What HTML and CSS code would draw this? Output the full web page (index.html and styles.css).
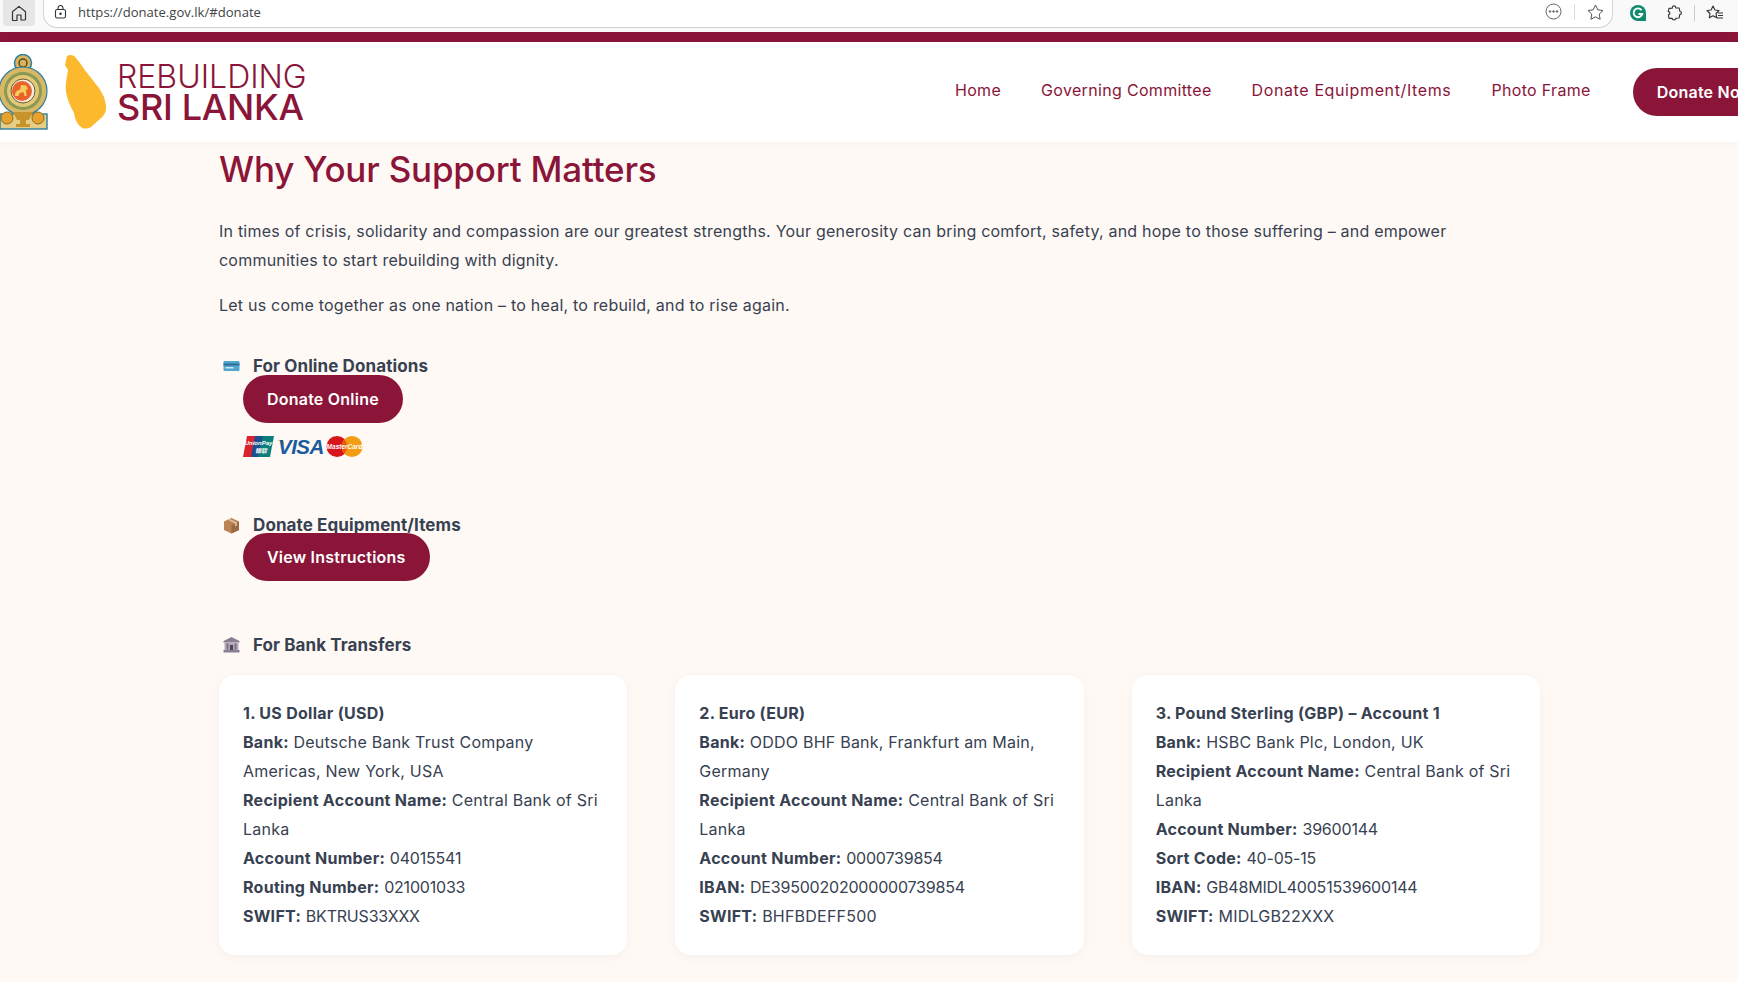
FILE: index.html
```
<!DOCTYPE html>
<html lang="en">
<head>
<meta charset="utf-8">
<title>Rebuilding Sri Lanka</title>
<link rel="stylesheet" href="styles.css">
</head>
<body>
<div class="toolbar">
  <div class="home-btn">
    <svg width="16" height="16" viewBox="0 0 16 16" fill="none" stroke="#333" stroke-width="1.2" stroke-linejoin="round"><path d="M1.5 6.8 8 1.4l6.5 5.400v7.400a.8.8 0 0 1-.8.8H10V10H6v5.600H2.300a.8.8 0 0 1-.8-.8z"/></svg>
  </div>
  <div class="address">
    <svg class="lock" width="13" height="14" viewBox="0 0 13 14" fill="none" stroke="#333" stroke-width="1.100"><rect x="1.500" y="4.500" width="10" height="8.500" rx="1.800"/><path d="M4 4.500V3a2.500 2.500 0 0 1 5 0v1.500"/><circle cx="6.500" cy="8.700" r=".7" fill="#333"/></svg>
    <span class="url">https://donate.gov.lk/#donate</span>
    <svg class="addr-more" width="17" height="17" viewBox="0 0 17 17" fill="none" stroke="#666" stroke-width="1"><circle cx="8.500" cy="8.500" r="7.500"/><circle cx="5" cy="8.500" r=".8" fill="#666"/><circle cx="8.500" cy="8.500" r=".8" fill="#666"/><circle cx="12" cy="8.500" r=".8" fill="#666"/></svg>
    <span class="addr-sep"></span>
    <svg class="addr-star" width="17" height="16" viewBox="0 0 17 16" fill="none" stroke="#555" stroke-width="1" stroke-linejoin="round"><path d="M8.500 1l2.300 4.800 5.200.7-3.800 3.600.9 5.200-4.600-2.500-4.600 2.500.9-5.200L1 6.500l5.200-.7z"/></svg>
  </div>
  <div class="extensions">
    <svg width="16" height="16" viewBox="0 0 16 16"><path d="M8 0a8 8 0 0 1 8 8v8H8A8 8 0 0 1 8 0z" fill="#0f8a70"/><path d="M11.600 5.200A4.400 4.400 0 1 0 12.300 9H8.500" fill="none" stroke="#fff" stroke-width="1.900"/></svg>
    <svg width="16" height="16" viewBox="0 0 16 16" fill="none" stroke="#333" stroke-width="1.100" stroke-linejoin="round"><path d="M6 1.200c1.500-.8 3 .2 2.800 1.800h3.400l.6 3.200c1.800-.3 2.500 3-.1 3.400l-.5 3.400-3.400.2c.2 2-3.400 2.500-3.600.2H2l-.6-3.600c2-.4 2-3-.2-3.200L2 3.400l3.400-.2c-.2-.8 0-1.600.6-2z"/></svg>
    <span class="ext-sep"></span>
    <svg width="18" height="16" viewBox="0 0 18 16" fill="none" stroke="#333" stroke-width="1.100" stroke-linejoin="round"><path d="M7 1l1.900 4 4.100.5-3 3 .7 4.300L7 10.700 3.300 12.800 4 8.500l-3-3 4.100-.5z"/><path d="M12 8h5M12 10.500h5M11 13h6"/></svg>
  </div>
</div>
<div class="topline"></div>
<header class="site-header">
  <div class="brand">
    <svg class="emblem" width="50" height="76" viewBox="0 0 50 76">
      <circle cx="24" cy="9" r="8.500" fill="#d9b45c" stroke="#2c7f9e" stroke-width="1.500"/>
      <circle cx="24" cy="9" r="4" fill="none" stroke="#5a4a1f" stroke-width="1.500"/>
      <circle cx="24" cy="37" r="24" fill="#d8b765" stroke="#2c7f9e" stroke-width="1.200"/>
      <circle cx="24" cy="37" r="19" fill="#8a9a55"/>
      <circle cx="24" cy="37" r="16" fill="#e3c878"/>
      <circle cx="24" cy="37" r="12" fill="#f4efe0" stroke="#6e5a2a"/>
      <circle cx="23" cy="37" r="10" fill="#e8642c"/>
      <path d="M16 42c0-4 2-6 5-6l1-5 5 .5 2 3-2 1.500 .5 6h-2l-1-4-4 1-1 3h-2z" fill="#f2cd5c"/>
      <rect x="1" y="60" width="47" height="15" fill="#e6cd86" stroke="#2c7f9e" stroke-width="1.400"/>
      <circle cx="8" cy="64" r="6" fill="#e5a22c" stroke="#8a6a1f"/>
      <circle cx="39" cy="64" r="6" fill="#e5a22c" stroke="#8a6a1f"/>
      <path d="M14 58h20l-4 8h-3v4h4v3H17v-3h4v-4h-3z" fill="#c9932c"/>
    </svg>
    <svg class="island" width="44" height="76" viewBox="0 0 44 76"><path d="M3 2C6 0 10 1 12 4l4 5 4 6 7 9 8 10 5 9 2 8c1 6-2 11-6 14l-9 8c-4 2-8 2-10 0-4-3-6-8-7-14C2 44 1 36 2 28l2-12-3-5z" fill="#fdb92e"/></svg>
    <div class="wordmark">
      <span class="word-top">REBUILDING</span>
      <span class="word-bottom">SRI LANKA</span>
    </div>
  </div>
  <nav class="nav">
    <a class="nav-link">Home</a>
    <a class="nav-link">Governing Committee</a>
    <a class="nav-link nav-wide">Donate Equipment/Items</a>
    <a class="nav-link">Photo Frame</a>
    <a class="btn nav-btn">Donate Now</a>
  </nav>
</header>
<main class="content">
  <h1 class="title">Why Your Support Matters</h1>
  <p class="lead">In times of crisis, solidarity and compassion are our greatest strengths. Your generosity can bring comfort, safety, and hope to those suffering – and empower communities to start rebuilding with dignity.</p>
  <p class="lead lead-last">Let us come together as one nation – to heal, to rebuild, and to rise again.</p>

  <div class="section-head">
    <svg class="head-icon" width="18" height="14" viewBox="0 0 18 14"><rect x="1" y="2" width="16" height="10" rx="1" fill="#4fa6cf"/><rect x="1" y="4.500" width="16" height="2" fill="#2d6f96"/><rect x="3" y="8" width="8" height="1.500" fill="#cfe6f2"/></svg>
    <span>For Online Donations</span>
  </div>
  <a class="btn action-btn">Donate Online</a>
  <div class="cards-logos">
    <svg width="31" height="21" viewBox="0 0 31 21"><path d="M4 0h10L9 21H0z" fill="#d9232e"/><path d="M12 0h9l-4 21H8z" fill="#1b4f8f"/><path d="M20 0h11l-4 21H15z" fill="#0d7f7a"/><text x="15.500" y="9" text-anchor="middle" class="logo-tiny">UnionPay</text><text x="18" y="17" text-anchor="middle" class="logo-tiny">银联</text></svg>
    <svg width="48" height="21" viewBox="0 0 48 21"><path d="M0 4c4 0 7 2 9 7L7 4z" fill="#e8a62c"/><text x="2" y="18" class="visa">VISA</text></svg>
    <svg width="37" height="21" viewBox="0 0 37 21"><circle cx="11" cy="10.500" r="10.500" fill="#d8141c"/><circle cx="26" cy="10.500" r="10.500" fill="#f39c14"/><path d="M18.500 3.500a10.500 10.500 0 0 1 0 14 10.500 10.500 0 0 1 0-14z" fill="#e8590c"/><text x="18.500" y="13" text-anchor="middle" class="logo-mc">MasterCard</text></svg>
  </div>

  <div class="section-head head-items">
    <svg class="head-icon" width="18" height="17" viewBox="0 0 18 17"><path d="M9 1l7.500 3.500v8.500L9 16.500 1.500 13V4.500z" fill="#b98355"/><path d="M9 8.500l7.500-4V13L9 16.500z" fill="#9a6a42"/><path d="M5 2.800l7.500 3.700v3l2-1V5.300L7 1.800z" fill="#dcbb95"/></svg>
    <span>Donate Equipment/Items</span>
  </div>
  <a class="btn action-btn action-tight">View Instructions</a>

  <div class="section-head head-bank">
    <svg class="head-icon" width="18" height="16" viewBox="0 0 18 16"><path d="M9 0l8 4v1.500H1V4z" fill="#8a7f92"/><rect x="2" y="5.500" width="14" height="7.500" fill="#b4abb9"/><rect x="4" y="6.500" width="2" height="6" fill="#7d7287"/><rect x="12" y="6.500" width="2" height="6" fill="#7d7287"/><rect x="7.500" y="8" width="3" height="5" fill="#4d4558"/><rect x="1" y="13" width="16" height="2.500" fill="#8a7f92"/></svg>
    <span>For Bank Transfers</span>
  </div>
  <div class="bank-grid">
    <article class="bank-card">
      <strong>1. US Dollar (USD)</strong><br>
      <strong>Bank:</strong> Deutsche Bank Trust Company Americas, New York, USA<br>
      <strong>Recipient Account Name:</strong> Central Bank of Sri Lanka<br>
      <strong>Account Number:</strong> <span class="num">04015541</span><br>
      <strong>Routing Number:</strong> <span class="num">021001033</span><br>
      <strong>SWIFT:</strong> <span class="num">BKTRUS33XXX</span>
    </article>
    <article class="bank-card">
      <strong>2. Euro (EUR)</strong><br>
      <strong>Bank:</strong> ODDO BHF Bank, Frankfurt am Main, Germany<br>
      <strong>Recipient Account Name:</strong> Central Bank of Sri Lanka<br>
      <strong>Account Number:</strong> <span class="num">0000739854</span><br>
      <strong>IBAN:</strong> <span class="num">DE39500202000000739854</span><br>
      <strong>SWIFT:</strong> BHFBDEFF500
    </article>
    <article class="bank-card">
      <strong>3. Pound Sterling (GBP) – Account 1</strong><br>
      <strong>Bank:</strong> HSBC Bank Plc, London, UK<br>
      <strong>Recipient Account Name:</strong> Central Bank of Sri Lanka<br>
      <strong>Account Number:</strong> <span class="num">39600144</span><br>
      <strong>Sort Code:</strong> <span class="num">40-05-15</span><br>
      <strong>IBAN:</strong> <span class="num">GB48MIDL40051539600144</span><br>
      <strong>SWIFT:</strong> MIDLGB22XXX
    </article>
  </div>
</main>
</body>
</html>
```
FILE: styles.css
```
* { box-sizing: border-box; }
html, body { margin: 0; height: 982px; overflow: hidden; }
body { background: #fff9f5; color: #374151; font-family: Inter, "Noto Sans", sans-serif; font-size: 16px; letter-spacing: .22px; line-height: 29px; }

.toolbar { height: 32px; background: #f9f9f9; display: flex; align-items: flex-start; letter-spacing: 0; }
.home-btn { width: 32px; height: 26px; margin-left: 3px; background: #e6e6e6; border-radius: 0 0 4px 4px; display: flex; align-items: center; justify-content: center; }
.address { width: 1570px; height: 28px; margin-left: 8px; background: #fff; border: 1px solid #d2d2d2; border-top: 0; border-radius: 0 0 14px 14px; display: flex; align-items: center; padding: 0 8px 4px 10px; }
.lock { flex: none; }
.url { font-family: "Open Sans", sans-serif; font-size: 13.100px; line-height: 16px; color: #444; margin-left: 11px; flex: 1; }
.addr-sep { width: 1px; height: 16px; background: #ddd; margin: 0 12px; }
.extensions { display: flex; align-items: center; height: 26px; margin-left: 17px; gap: 21px; }
.ext-sep { width: 1px; height: 16px; background: #ccc; margin: 0 -10px; }

.topline { height: 10px; background: #8a1538; }

.site-header { height: 100px; background: #fff; display: flex; align-items: center; box-shadow: 0 2px 8px rgba(0,0,0,.03); position: relative; }
.brand { flex: 0 0 956px; display: flex; align-items: center; height: 100%; margin-left: -1px; }
.emblem { flex: none; }
.island { flex: none; margin-left: 15px; }
.wordmark { display: flex; flex-direction: column; margin-left: 9px; color: #8a1538; line-height: 30px; letter-spacing: 0; }
.word-top { font-size: 32px; font-weight: 300; }
.word-bottom { font-size: 36px; font-weight: 500; letter-spacing: -.3px; }
.nav { display: flex; align-items: center; gap: 40px; flex: none; }
.nav-link { color: #8a1538; padding-bottom: 4px; letter-spacing: .32px; }
.nav-wide { letter-spacing: .62px; }

.btn { display: inline-flex; align-items: center; justify-content: center; height: 48px; padding: 0 24px; border-radius: 24px; background: #8a1538; color: #fff; font-weight: 600; letter-spacing: .22px; white-space: nowrap; }
.nav-btn { margin-left: 2px; }

.content { width: 1321px; margin-left: 219px; padding-top: 5px; }
.title { margin: 0 0 26px; color: #8a1538; font-size: 35px; line-height: 44px; font-weight: 500; letter-spacing: -.2px; }
.lead { margin: 0 0 16px; width: 1250px; }
.lead-last { margin-bottom: 34px; }

.section-head { display: flex; align-items: center; height: 24px; line-height: 24px; font-size: 17px; letter-spacing: .1px; font-weight: 700; color: #374151; }
.head-icon { flex: none; margin: 0 12px 0 3px; width: 19px; }
.action-btn { margin: -3px 0 0 24px; display: flex; width: fit-content; position: relative; }
.action-tight { margin-top: -4px; }
.cards-logos { display: flex; align-items: center; gap: 2px; margin: 13px 0 0 24px; height: 21px; }
.logo-tiny { font-family: "Liberation Sans", "Noto Sans CJK SC", sans-serif; font-size: 6px; font-style: italic; font-weight: 700; fill: #fff; letter-spacing: 0; }
.logo-mc { font-family: "Liberation Sans", sans-serif; font-size: 6.500px; font-weight: 700; font-style: italic; fill: #fff; letter-spacing: 0; }
.visa { font-family: "Liberation Sans", sans-serif; font-style: italic; font-weight: 700; font-size: 20.500px; letter-spacing: -.5px; fill: #1a5a9e; }
.head-items { margin-top: 56px; }
.head-bank { margin-top: 52px; }

.bank-grid { display: grid; grid-template-columns: repeat(3, 1fr); gap: 48px; margin-top: 18px; }
.bank-card { background: #fff; border-radius: 16px; padding: 24px; box-shadow: 0 2px 10px rgba(0,0,0,.04); height: 280px; }
.bank-card strong { font-weight: 700; letter-spacing: .27px; }
.num { letter-spacing: -.2px; }
```
